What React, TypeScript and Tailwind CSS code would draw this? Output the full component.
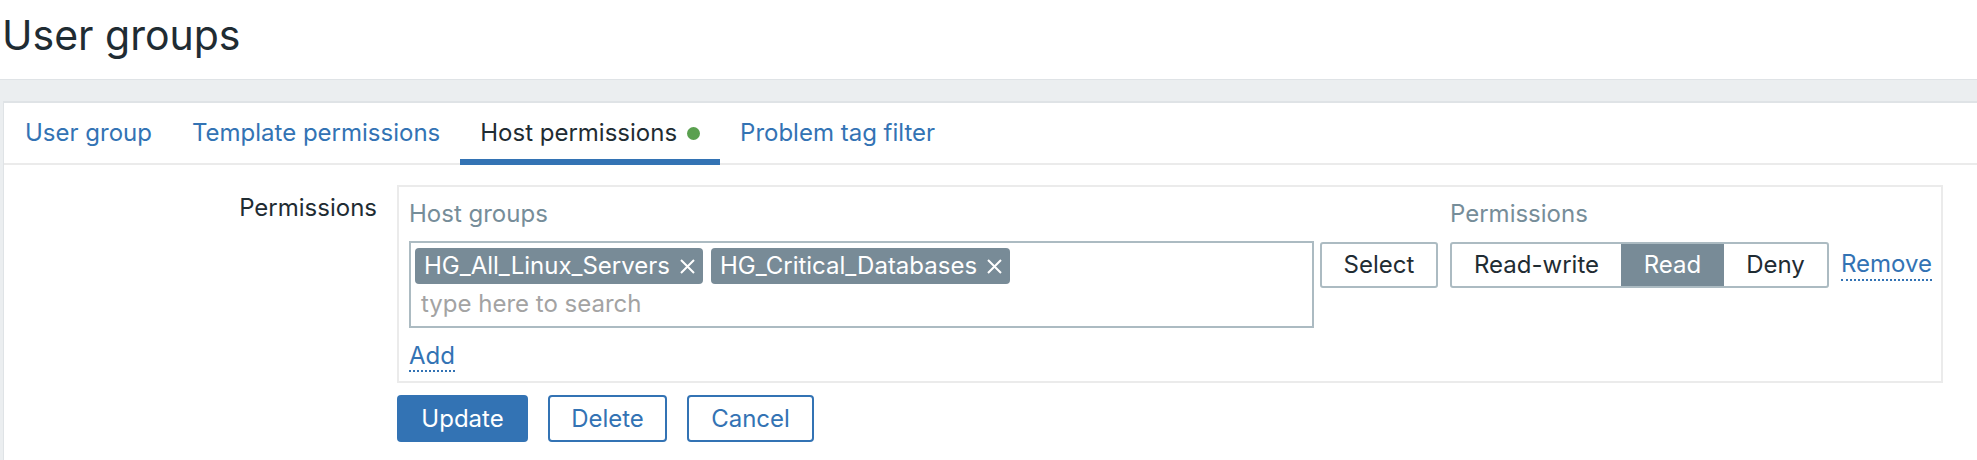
import React from 'react';

const tabs = [
  { label: 'User group', active: false },
  { label: 'Template permissions', active: false },
  { label: 'Host permissions', active: true, dot: true },
  { label: 'Problem tag filter', active: false },
];

const hostGroups = ['HG_All_Linux_Servers', 'HG_Critical_Databases'];

const TagX: React.FC = () => (
  <svg width="15" height="15" viewBox="0 0 15 15" className="shrink-0">
    <path d="M1 1L14 14M14 1L1 14" stroke="white" strokeWidth="2" fill="none" />
  </svg>
);

const Tag: React.FC<{ name: string }> = ({ name }) => (
  <span className="flex items-center gap-[10px] h-[36px] pl-[9px] pr-[8px] rounded-[4px] bg-[#788b97] text-white">
    {name}
    <TagX />
  </span>
);

export default function App() {
  return (
    <div className="w-[1977px] h-[460px] overflow-hidden flex flex-col bg-white text-[24px] leading-[24px] text-[#1f2c33] font-['Inter','Noto_Sans',sans-serif]">
      {/* page header */}
      <div className="h-[79px] shrink-0 pl-[2px] pt-[15px]">
        <h1 className="text-[41px] leading-[41px] font-normal">User groups</h1>
      </div>

      <div className="flex-1 flex flex-col bg-[#ebeef0] border-t border-[#dfe3e6] pt-[21px] pl-[3px]">
        <div className="flex-1 bg-white border-t-2 border-l border-[#dfe3e6]">
          {/* tabs */}
          <ul className="flex pl-[1px] border-b-2 border-[#ebebeb]">
            {tabs.map((t) => (
              <li
                key={t.label}
                className={`relative flex items-center px-[20px] pt-[18px] pb-[18px] ${t.active ? 'text-[#1f2c33]' : 'text-[#3373b4]'}`}
              >
                {t.label}
                {t.dot && <span className="ml-[10px] w-[13px] h-[13px] rounded-full bg-[#5aa04f]" />}
                {t.active && <span className="absolute left-0 right-0 -bottom-[2px] h-[6px] bg-[#3373b4]" />}
              </li>
            ))}
          </ul>

          {/* form */}
          <div className="flex pt-[20px] pr-[34px]">
            <div className="w-[373px] shrink-0 text-right pt-[11px]">Permissions</div>
            <div className="ml-[20px] flex-1">
              <div className="border-2 border-[#ebebeb] pt-[15px] pl-[10px] pb-[9px]">
                <div className="flex text-[#768d99]">
                  <div className="w-[1041px]">Host groups</div>
                  <div>Permissions</div>
                </div>

                <div className="mt-[15px] flex items-start">
                  <div className="w-[905px] h-[87px] border-2 border-[#acbbc2] pt-[5px] px-[4px]">
                    <div className="flex gap-[8px]">
                      {hostGroups.map((g) => (
                        <Tag key={g} name={g} />
                      ))}
                    </div>
                    <div className="mt-[8px] pl-[6px] text-[#a3a3a3]">type here to search</div>
                  </div>

                  <button className="ml-[6px] mt-[1px] w-[118px] h-[46px] border-2 border-[#acbbc2] rounded-[3px] flex items-center justify-center">
                    Select
                  </button>

                  <div className="ml-[12px] mt-[1px] flex h-[46px] border-2 border-[#acbbc2] rounded-[3px] overflow-hidden">
                    <div className="w-[169px] flex items-center justify-center">Read-write</div>
                    <div className="w-[103px] flex items-center justify-center bg-[#788b97] text-white">Read</div>
                    <div className="w-[103px] flex items-center justify-center">Deny</div>
                  </div>

                  <span className="ml-[12px] mt-[11px] pb-[3px] text-[#3373b4] border-b-2 border-dotted border-[#3373b4]">
                    Remove
                  </span>
                </div>

                <div className="mt-[16px]">
                  <span className="inline-block pb-[2px] text-[#3373b4] border-b-2 border-dotted border-[#3373b4]">Add</span>
                </div>
              </div>

              <div className="mt-[12px] flex gap-[20px]">
                <button className="w-[131px] h-[47px] rounded-[4px] bg-[#3373b4] text-white">Update</button>
                <button className="w-[119px] h-[47px] rounded-[4px] border-2 border-[#3373b4] text-[#3373b4]">Delete</button>
                <button className="w-[127px] h-[47px] rounded-[4px] border-2 border-[#3373b4] text-[#3373b4]">Cancel</button>
              </div>
            </div>
          </div>
        </div>
      </div>
    </div>
  );
}
